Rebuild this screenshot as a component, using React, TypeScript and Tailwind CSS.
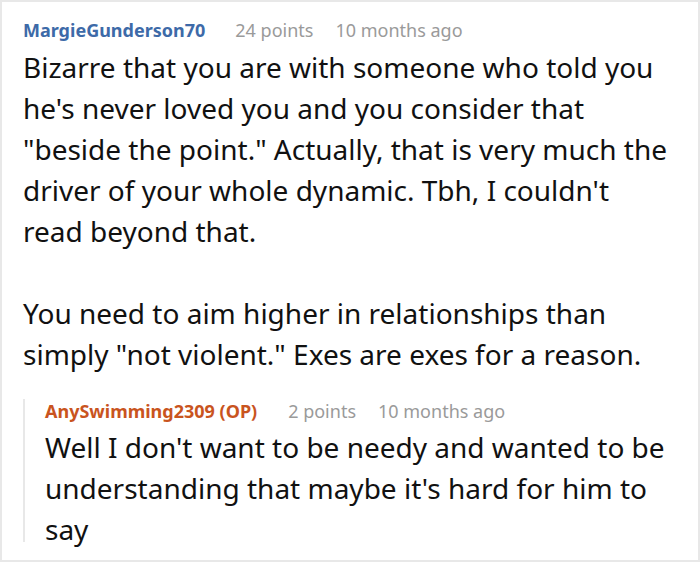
export default function App() {
  return (
    <div className="w-[700px] h-[562px] bg-white border-2 border-[#e8e8e8] font-['Noto_Sans',sans-serif] overflow-hidden">
      <div className="pl-[21px] pr-[28px] pt-[16px]">
        <div className="flex items-baseline text-[18px] leading-[24px]">
          <span className="font-bold text-[#3d6aa8]">MargieGunderson70</span>
          <span className="ml-[30px] text-[#9a9a9a]">24 points</span>
          <span className="ml-[22px] text-[#9a9a9a]">10 months ago</span>
        </div>
        <div className="mt-[5px] text-[28px] leading-[41px] text-[#111]">
          <p>
            Bizarre that you are with someone who told you he's never loved you and you consider that
            "beside the point." Actually, that is very much the driver of your whole dynamic. Tbh, I
            couldn't read beyond that.
          </p>
          <p className="mt-[41px]">
            You need to aim higher in relationships than simply "not violent." Exes are exes for a
            reason.
          </p>
        </div>
        <div className="mt-[24px] h-[143px] border-l-2 border-[#e8e8e8] pl-[20px]">
          <div className="flex items-baseline text-[18px] leading-[24px]">
            <span className="font-bold text-[#c9541e]">AnySwimming2309 (OP)</span>
            <span className="ml-[31px] text-[#9a9a9a]">2 points</span>
            <span className="ml-[22px] text-[#9a9a9a]">10 months ago</span>
          </div>
          <p className="mt-[4px] text-[28px] leading-[41px] text-[#111]">
            Well I don't want to be needy and wanted to be understanding that maybe it's hard for him
            to say
          </p>
        </div>
      </div>
    </div>
  );
}
